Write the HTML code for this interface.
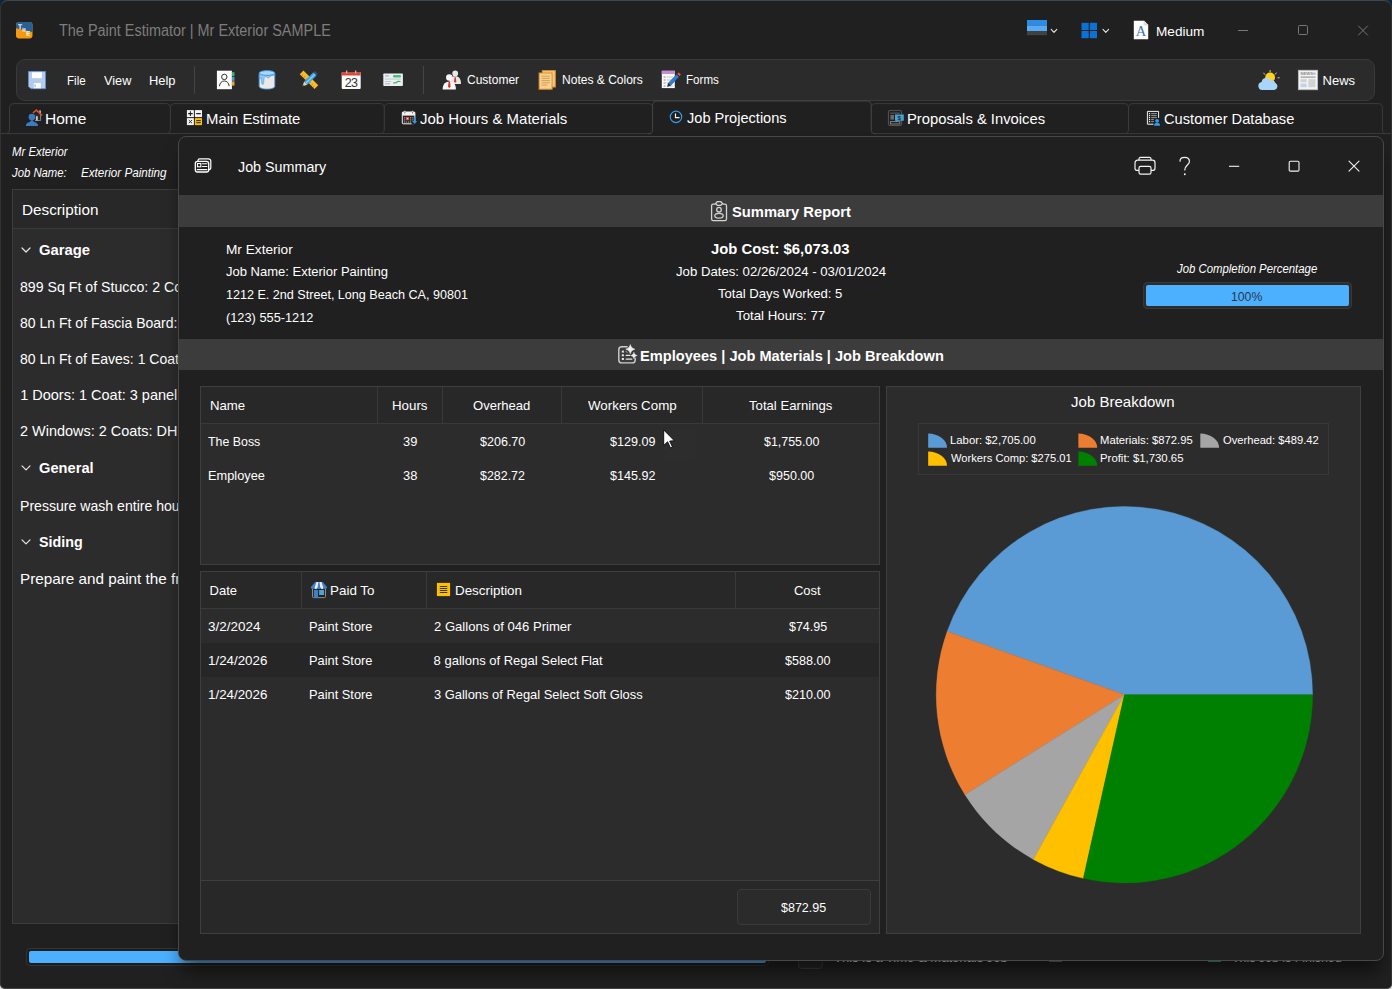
<!DOCTYPE html>
<html><head><meta charset="utf-8"><title>The Paint Estimator</title>
<style>
html,body{margin:0;padding:0;background:#202020;}
body{width:1392px;height:989px;position:relative;overflow:hidden;font-family:"Liberation Sans",sans-serif;color:#fff;}
.a{position:absolute;box-sizing:border-box;}
.t{position:absolute;white-space:pre;transform-origin:0 50%;font-family:"Liberation Sans",sans-serif;}
svg{position:absolute;overflow:visible;}
#desk{left:0;top:0;width:1392px;height:989px;background:linear-gradient(#10263c 0,#10263c 50%,#d8d8d8 50%,#d8d8d8 100%);}
#win{left:0;top:0;width:1392px;height:989px;background:#202020;border:1px solid #454545;border-left-color:#333;border-right-color:#333;border-top-color:#3a4855;border-radius:8px 8px 5px 5px;}
#toolbar{left:16px;top:59px;width:1359px;height:42px;background:#2b2b2b;border:1px solid #3a3a3a;border-radius:9px;}
.sep{width:1px;background:#444;top:66px;height:28px;}
.tab{top:103px;height:31px;border:1px solid #373737;border-bottom:none;border-radius:7px 7px 0 0;background:#202020;}
#tabline{left:0;top:133px;width:1392px;height:1px;background:#373737;}
#tabact{left:652px;top:101px;width:220px;height:35px;border:1px solid #373737;border-bottom:none;border-radius:7px 7px 0 0;background:#1e1e1e;}
#grid{left:12px;top:189px;width:1368px;height:735px;background:#2c2c2c;border:1px solid #3d3d3d;}
#gridhead{left:13px;top:190px;width:1366px;height:39px;background:#282828;border-bottom:1px solid #3a3a3a;}
#pbar{left:26px;top:948px;width:743px;height:18px;border:1.5px solid #343434;border-radius:4px;background:#1d1d1d;}
#pfill{left:29px;top:951px;width:737px;height:12px;background:#4cb0ff;border-radius:2px;}
#dlgshadow{left:178px;top:136px;width:1206px;height:825px;border-radius:8px;box-shadow:0 14px 18px -4px rgba(0,0,0,0.55);}
#dlg{left:178px;top:136px;width:1206px;height:825px;background:#202020;border:1px solid #484848;border-radius:8px;overflow:hidden;}
.sec{left:179px;width:1204px;background:#3c3c3c;}
.panel{background:#2c2c2c;border:1px solid #3f3f3f;}
.vl{width:1px;background:#393939;}
.hl{height:1px;background:#393939;}

</style></head>
<body>
<div class="a" id="desk"></div>
<div class="a" id="win"></div>
<!-- title bar icons -->
<svg class="a" style="left:0;top:0" width="1392" height="989" viewBox="0 0 1392 989">
<g>
<clipPath id="appc"><rect x="16" y="22" width="16.5" height="16.5" rx="3.2"/></clipPath>
<g clip-path="url(#appc)">
<rect x="16" y="22" width="17" height="17" fill="#f59a0e"/>
<path d="M16,22 H33 V32.2 L16,28.2 Z" fill="#2a5f8f"/>
<path d="M18,24.3h4.2v1h-1.5v4h-1.2v-4H18z" fill="#e8eef5"/>
<path d="M22.4,27.8h1.1v1.5h.9v-1.3h1.1v4h-1.1v-1.7h-.9v1.5h-1.1z" fill="#e8eef5" opacity=".9"/>
<path d="M26.4,31.2h3.4v1h-2.2v.8h1.9v.9h-1.9v.9h2.3v1h-3.5z" fill="#fdf3dd"/>
</g></g>
<rect x="1027" y="20" width="20" height="5.4" fill="#2b8ce8"/><rect x="1027" y="25.4" width="20" height="5.6" fill="#56aaf6"/><rect x="1027" y="31" width="20" height="4.2" fill="#414141"/>
<path d="M1051.2,29.3 l2.8,3 l2.8,-3" fill="none" stroke="#e6e6e6" stroke-width="1.1" stroke-linecap="round" stroke-linejoin="round"/>
<path d="M1103,29.3 l2.8,3 l2.8,-3" fill="none" stroke="#e6e6e6" stroke-width="1.1" stroke-linecap="round" stroke-linejoin="round"/>
<rect x="1081.5" y="22.8" width="7.2" height="7.2" fill="#0b72d4"/>
<rect x="1089.8" y="22.8" width="7.2" height="7.2" fill="#0b72d4"/>
<rect x="1081.5" y="31.0" width="7.2" height="7.2" fill="#0b72d4"/>
<rect x="1089.8" y="31.0" width="7.2" height="7.2" fill="#0b72d4"/>
<path d="M1133.8,20.8 h10.2 l4.2,4.2 v14.2 h-14.4 z" fill="#fdfdfd"/><path d="M1144,20.8 v4.2 h4.2 z" fill="#e4e4e4" stroke="#cfcfcf" stroke-width="0.5"/>
<text x="1141" y="36.4" font-family="Liberation Serif,serif" font-size="14.5" fill="#3c74b8" text-anchor="middle">A</text>
<path d="M1238,30.5 h10" stroke="#777" stroke-width="1"/>
<rect x="1298.5" y="25.5" width="9" height="9" rx="1" fill="none" stroke="#777" stroke-width="1"/>
<path d="M1358.2,25.7 l9.6,9.6 M1367.8,25.7 l-9.6,9.6" stroke="#777" stroke-width="1" fill="none"/>
</svg>
<!-- toolbar -->
<div class="a" id="toolbar"></div>
<div class="a sep" style="left:194px"></div>
<div class="a sep" style="left:423px"></div>
<svg class="a" style="left:0;top:0" width="1392" height="989" viewBox="0 0 1392 989">
<path d="M28.5,71.5 h17 v17.2 h-14.6 l-2.4,-2.4 z" fill="#b4cbe9" stroke="#5f8dc8" stroke-width="1"/>
<rect x="31.6" y="72" width="10.6" height="6.6" fill="#ffffff" stroke="#9fbbe0" stroke-width="0.5"/>
<rect x="33.3" y="82.8" width="7.8" height="5.4" fill="#fafcff" stroke="#9fbbe0" stroke-width="0.5"/>
<rect x="34.4" y="84.2" width="1.5" height="3" fill="#b4cbe9"/>
<rect x="216.9" y="70.7" width="15" height="18.5" fill="#fdfdfd"/>
<rect x="231.9" y="72.2" width="2.6" height="4" fill="#3fb760"/>
<rect x="231.9" y="77" width="2.6" height="3.8" fill="#4a9be6"/>
<rect x="231.9" y="81.4" width="2.6" height="4.2" fill="#f0a030"/>
<circle cx="224.3" cy="76.9" r="2.7" fill="none" stroke="#333" stroke-width="1"/>
<path d="M219.4,86.2 c0.5,-3.4 2.3,-5.2 4.9,-5.2 c2.6,0 4.4,1.8 4.9,5.2" fill="none" stroke="#333" stroke-width="1"/>
<path d="M259.2,73 v13.2 c0,1.7 3.5,2.9 7.8,2.9 c4.3,0 7.8,-1.2 7.8,-2.9 v-13.2 z" fill="#ebe9e7"/>
<path d="M259.2,74.6 v3.6 c0.9,0.5 1.5,0.3 1.8,-0.5 l0.7,5.8 c0.4,1.2 1.6,1.2 1.9,0 l0.5,-5.6 c0.5,-1.5 1.9,-1.7 2.9,-0.6 c0.9,1 1.8,0.9 2.5,-0.1 c0.9,-1.3 2.5,-1.9 5.3,-2 v-2 z" fill="#8fc9f3" stroke="#4a9ce4" stroke-width="0.6"/>
<path d="M259.2,73 v13.2 c0,1.7 3.5,2.9 7.8,2.9 c4.3,0 7.8,-1.2 7.8,-2.9 v-13.2" fill="none" stroke="#4a9ce4" stroke-width="0.9"/>
<ellipse cx="267" cy="73" rx="7.8" ry="2.4" fill="#a9d7f8" stroke="#3d8fde" stroke-width="0.9"/>
<g transform="translate(309 79.8) scale(0.9) translate(-309 -79.8) rotate(-45 309 79.8)"><rect x="306.1" y="68.2" width="5.8" height="23.2" fill="#f6be2c"/>
<path d="M306.4,71h2 M306.4,74h2.6 M306.4,77h2 M306.4,80h2.6 M306.4,83h2 M306.4,86h2.6 M306.4,89h2" stroke="#b0503a" stroke-width="0.7"/></g>
<g transform="translate(309 79.8) scale(0.9) translate(-309 -79.8) rotate(45 309 79.8)"><rect x="306.5" y="70.4" width="5" height="14.6" fill="#38a4f0"/>
<rect x="306.5" y="68" width="5" height="2.6" rx="1" fill="#3b4a5c"/>
<path d="M306.5,85 h5 l-2.5,5 z" fill="#f2cf9a"/><path d="M308.2,88.4 h1.6 l-0.8,1.8 z" fill="#444"/>
<rect x="308.4" y="70.4" width="1.5" height="14.6" fill="#86cbf9"/></g>
<rect x="341.7" y="72" width="19" height="16.9" rx="1" fill="#fbfbfb"/>
<path d="M341.7,73 a1,1 0 0 1 1,-1 h17 a1,1 0 0 1 1,1 v2.6 h-19 z" fill="#d64a3a"/>
<rect x="346" y="70.5" width="1.3" height="3" fill="#bbb"/><rect x="355" y="70.5" width="1.3" height="3" fill="#bbb"/>
<text x="351" y="87.3" font-family="Liberation Sans,sans-serif" font-size="12.5" fill="#333" text-anchor="middle" letter-spacing="-0.6">23</text>
<rect x="383.3" y="73.5" width="19.6" height="12.5" rx="0.8" fill="#eceff1"/>
<rect x="385" y="75.2" width="4" height="1.4" fill="#b9bec4"/><rect x="393" y="75" width="8" height="2.4" rx="1" fill="#4cc07a"/>
<rect x="385" y="78.6" width="16" height="1" fill="#c3c8cd"/>
<rect x="385" y="81" width="6" height="1" fill="#c3c8cd"/><rect x="385" y="83.2" width="5" height="1.2" fill="#b9bec4"/>
<path d="M393.5,83.4 c1,-2 2,0.5 3,-1 s2,-1.2 4,-0.8" fill="none" stroke="#3db36b" stroke-width="1.2"/>
<circle cx="455.2" cy="73.452" r="2.8520000000000003" fill="#e9e9e9"/><path d="M449.404,83.94 c0,-5.2 2.0240000000000005,-7.6 5.796,-7.6 c3.772,0 5.796,2.4 5.796,7.6 z" fill="#e9e9e9"/><path d="M454.556,77.22399999999999 h1.288 l0.46,4.232 l-1.104,1.4720000000000002 l-1.104,-1.4720000000000002 z" fill="#d8342a"/>
<circle cx="449.3" cy="77.455" r="3.2550000000000003" fill="#f7f7f7"/><path d="M442.685,89.42500000000001 c0,-5.2 2.3100000000000005,-7.6 6.615,-7.6 c4.305,0 6.615,2.4 6.615,7.6 z" fill="#f7f7f7"/><path d="M448.565,81.76 h1.47 l0.525,4.83 l-1.26,1.6800000000000002 l-1.26,-1.6800000000000002 z" fill="#d8342a"/>
<rect x="542.3" y="70.6" width="13" height="16.4" fill="#f3c685" stroke="#dd8c2c" stroke-width="1"/>
<rect x="539.1" y="73" width="13" height="16.2" fill="#f7d193" stroke="#dd8c2c" stroke-width="1"/>
<path d="M541.5,76.2h8.4 M541.5,78.4h8.4 M541.5,80.6h8.4 M541.5,82.8h8.4 M541.5,85h6" stroke="#c9963e" stroke-width="0.8"/>
<rect x="661.8" y="70.8" width="13" height="17.3" fill="#fbfbfb"/>
<rect x="661.8" y="70.8" width="13" height="3.2" fill="#c78bd3"/>
<path d="M663.6,77h2 M663.6,80h2 M663.6,83h2 M663.6,86h2" stroke="#8a8a8a" stroke-width="1"/>
<path d="M666.8,77h6 M666.8,80h5 M666.8,83h3.4 M666.8,86h6" stroke="#c4c4c4" stroke-width="1"/>
<path d="M676.5,74.6 l2.4,2.2 l-8.2,8.6 l-3.2,1 l0.9,-3.3 z" fill="#2f7fd6" stroke="#1f4f86" stroke-width="0.5"/>
<path d="M667.5,86.4 l0.9,-3.3 l2.3,2.3 z" fill="#2b2b2b"/>
<path d="M677.2,73.9 l1,-1 a0.9,0.9 0 0 1 1.3,0 l1,1 a0.9,0.9 0 0 1 0,1.2 l-1,1 z" fill="#e2574c"/>
<path d="M1263.4,72.8 l1.8,2 M1270.1,70 v2.2 M1276.6,72.6 l-1.8,2 M1277.6,77.8 h2" stroke="#c9c9c9" stroke-width="1" fill="none"/>
<circle cx="1270.1" cy="77.4" r="4.9" fill="#ffd21f"/>
<path d="M1262.2,90.1 a4.1,4.1 0 0 1 -0.6,-8.1 a5.2,5.2 0 0 1 9.8,-1.4 a3.6,3.6 0 0 1 4,2.4 a3.8,3.8 0 0 1 -1.2,7.1 z" fill="#a8d5f8"/>
<rect x="1298.4" y="70.3" width="19.2" height="19.4" fill="#f2f2f2" stroke="#bdbdbd" stroke-width="0.9"/>
<text x="1300.4" y="75.2" font-family="Liberation Sans,sans-serif" font-size="4.2" font-weight="700" fill="#8e8e8e">NEWS</text>
<rect x="1312.6" y="72.6" width="3" height="2" fill="#bdbdbd"/>
<rect x="1300.6" y="76.6" width="14.8" height="1" fill="#8a8a8a"/>
<rect x="1300.6" y="79.2" width="6" height="3" fill="#d2d2d2"/>
<rect x="1300.6" y="83.6" width="6" height="3.6" fill="#c3d2ea"/>
<rect x="1308.4" y="79.2" width="7" height="8" fill="#d2d2d2"/>
</svg>
<!-- tabs -->
<svg class="a" style="left:0;top:0" width="1392" height="989" viewBox="0 0 1392 989">
<path d="M5.0,133.6 Q9.5,133.6 9.5,129.1 V108.1 Q9.5,103.6 14.0,103.6 H165.9 Q170.4,103.6 170.4,108.1 V129.1 Q170.4,133.6 174.9,133.6" fill="#202020" stroke="#3b3b3b" stroke-width="1"/>
<path d="M165.9,133.6 Q170.4,133.6 170.4,129.1 V108.1 Q170.4,103.6 174.9,103.6 H379.8 Q384.3,103.6 384.3,108.1 V129.1 Q384.3,133.6 388.8,133.6" fill="#202020" stroke="#3b3b3b" stroke-width="1"/>
<path d="M379.8,133.6 Q384.3,133.6 384.3,129.1 V108.1 Q384.3,103.6 388.8,103.6 H648.1 Q652.6,103.6 652.6,108.1 V129.1 Q652.6,133.6 657.1,133.6" fill="#202020" stroke="#3b3b3b" stroke-width="1"/>
<path d="M866.7,133.6 Q871.2,133.6 871.2,129.1 V108.1 Q871.2,103.6 875.7,103.6 H1124.0 Q1128.5,103.6 1128.5,108.1 V129.1 Q1128.5,133.6 1133.0,133.6" fill="#202020" stroke="#3b3b3b" stroke-width="1"/>
<path d="M1124.0,133.6 Q1128.5,133.6 1128.5,129.1 V108.1 Q1128.5,103.6 1133.0,103.6 H1377.9 Q1382.4,103.6 1382.4,108.1 V129.1 Q1382.4,133.6 1386.9,133.6" fill="#202020" stroke="#3b3b3b" stroke-width="1"/>
<path d="M1,133.6 H1391" fill="none" stroke="#3b3b3b" stroke-width="1"/>
<path d="M648.1,133.8 Q652.6,133.8 652.6,129.3 V105.5 Q652.6,101 657.1,101 H866.7 Q871.2,101 871.2,105.5 V129.3 Q871.2,133.8 875.7,133.8" fill="#202020" stroke="#444" stroke-width="1"/>
<rect x="653.2" y="132.6" width="217.4" height="2.2" fill="#202020"/>
</svg>
<svg class="a" style="left:0;top:0" width="1392" height="989" viewBox="0 0 1392 989">
<rect x="39.3" y="110.4" width="1.5" height="3.2" fill="#cfcfcf"/>
<rect x="34.8" y="114" width="6" height="6.5" fill="#2b2b2b"/>
<path d="M40.6,114.6 V120.5 H35" fill="none" stroke="#8e8e8e" stroke-width="0.9"/>
<rect x="35.9" y="116.2" width="1.9" height="4.2" fill="#c9c9c9"/>
<path d="M32.9,113 L36.4,110.1 L42,115.4" fill="none" stroke="#d9532f" stroke-width="1.6"/>
<circle cx="31.9" cy="117" r="3.3" fill="#3a7cc0"/>
<path d="M25.9,125.9 c0,-2.7 1.6,-3.5 3.7,-4 c0.9,-0.2 1.1,-0.7 1.1,-1.6 h2.5 c0,0.9 0.2,1.4 1.1,1.6 c2.1,0.5 3.7,1.3 3.7,4 z" fill="#3a7cc0"/>
<rect x="186.9" y="110.1" width="7" height="7" fill="#f6f6f6"/><rect x="194.9" y="110.1" width="7.1" height="7" fill="#f6f6f6"/>
<rect x="186.9" y="118.1" width="7" height="7" fill="#f1f1f1"/><rect x="194.9" y="118.1" width="7.1" height="7" fill="#ffc000"/>
<path d="M190.4,111.3 v4.6 M188.1,113.6 h4.6 M196.2,113.6 h4.6" stroke="#222" stroke-width="1.1"/>
<path d="M188.8,120 l3.2,3.2 M192,120 l-3.2,3.2" stroke="#333" stroke-width="1"/>
<path d="M196.2,120.6 h4.6 M196.2,122.7 h4.6" stroke="#222" stroke-width="1"/>
<rect x="402.3" y="112" width="12.6" height="11.8" rx="0.8" fill="#262626" stroke="#f2f2f2" stroke-width="1"/>
<rect x="402.3" y="112" width="12.6" height="3.6" fill="#f2f2f2"/>
<rect x="404.2" y="110.8" width="1.2" height="2.6" fill="#f2f2f2"/><rect x="411.8" y="110.8" width="1.2" height="2.6" fill="#f2f2f2"/>
<rect x="404.6" y="111.6" width="0.6" height="1.8" fill="#262626"/><rect x="412.1" y="111.6" width="0.6" height="1.8" fill="#262626"/>
<g fill="#9a9a9a"><rect x="404" y="117.2" width="1.2" height="1.2"/><rect x="410" y="117.2" width="1.2" height="1.2"/><rect x="412.2" y="117.2" width="1.2" height="1.2"/>
<rect x="404" y="119.3" width="1.2" height="1.2"/><rect x="410" y="119.3" width="1.2" height="1.2"/><rect x="412.2" y="119.3" width="1.2" height="1.2"/>
<rect x="404" y="121.4" width="1.2" height="1.2"/><rect x="406" y="121.4" width="1.2" height="1.2"/><rect x="408" y="121.4" width="1.2" height="1.2"/><rect x="410" y="121.4" width="1.2" height="1.2"/></g>
<rect x="405.9" y="117" width="3.2" height="3.2" fill="#f24848"/><rect x="406.9" y="118" width="1.2" height="1.2" fill="#ffd0d0"/>
<rect x="411.6" y="121" width="6" height="3.6" fill="#202020"/>
<path d="M414.6,117.2 v5" stroke="#2f9cf0" stroke-width="1.3"/><path d="M412.2,120.9 h4.9 l-2.45,3.2 z" fill="#2f9cf0"/>
<circle cx="676" cy="116.9" r="5.7" fill="none" stroke="#3a9be8" stroke-width="1.2"/>
<path d="M675.5,113.6 v4.1 h4" fill="none" stroke="#f4f4f4" stroke-width="1.2"/>
<rect x="888.4" y="110.4" width="13.2" height="15.2" rx="1.6" fill="none" stroke="#565656" stroke-width="1"/>
<rect x="890.2" y="112.4" width="9.6" height="1.6" fill="#4a4a4a"/>
<rect x="890.4" y="115" width="3.6" height="4.6" fill="#6a6a6a"/>
<rect x="890.4" y="121.6" width="9.4" height="2.4" fill="none" stroke="#8a8a8a" stroke-width="0.9"/>
<path d="M895,114.4 h8.8 v6.4 h-6 l-1.6,1.8 v-1.8 h-1.2 z" fill="#43a3d4"/>
<text x="899.3" y="120" font-family="Liberation Sans,sans-serif" font-size="6.2" font-weight="700" fill="#1f2a38" text-anchor="middle">$</text>
<path d="M1153.5,124.2 h-6.1 v-12.8 h11.2 v6.5" fill="none" stroke="#f2f2f2" stroke-width="1"/>
<g fill="#f4f4f4"><rect x="1148.9" y="113" width="1.2" height="1.2"/><rect x="1148.9" y="115" width="1.2" height="1.2"/><rect x="1148.9" y="117" width="1.2" height="1.2"/><rect x="1148.9" y="119" width="1.2" height="1.2"/><rect x="1148.9" y="121" width="1.2" height="1.2"/></g>
<path d="M1151.2,113.6h5.6 M1151.2,115.6h5.6 M1151.2,117.6h5.6 M1151.2,119.6h2.6 M1151.2,121.6h2.6" stroke="#a8a8a8" stroke-width="0.9"/>
<circle cx="1157.1" cy="120.8" r="1.9" fill="#2f9cf0"/>
<path d="M1154.1,125.8 c0,-2.2 1.2,-3 3,-3 c1.8,0 3,0.8 3,3 z" fill="#2f9cf0"/>
</svg>
<!-- left panel -->
<div class="a" id="grid"></div>
<div class="a" id="gridhead"></div>
<svg class="a" style="left:0;top:0" width="1392" height="989" viewBox="0 0 1392 989">
<path d="M22,248.0 l4,4 l4,-4" fill="none" stroke="#e6e6e6" stroke-width="1.2" stroke-linecap="round" stroke-linejoin="round"/>
<path d="M22,465.8 l4,4 l4,-4" fill="none" stroke="#e6e6e6" stroke-width="1.2" stroke-linecap="round" stroke-linejoin="round"/>
<path d="M22,539.8 l4,4 l4,-4" fill="none" stroke="#e6e6e6" stroke-width="1.2" stroke-linecap="round" stroke-linejoin="round"/>
</svg>
<div class="a" id="pbar"></div>
<div class="a" id="pfill"></div>
<div class="a" style="left:798px;top:944px;width:25px;height:25px;border:1px solid #3a3a3a;border-radius:4px;background:#262626"></div>
<div class="a" style="left:1207.6px;top:960.6px;width:13px;height:1.4px;background:#2fae6e"></div>
<div class="a" style="left:1048.7px;top:960.6px;width:13px;height:1.6px;background:#6a6a6a"></div>

<span class="t" style="left:11.99px;top:144.30px;font-size:12px;line-height:17px;color:#ffffff;font-style:italic;transform:scaleX(0.9463);">Mr Exterior</span>
<span class="t" style="left:11.99px;top:165.10px;font-size:12px;line-height:17px;color:#ffffff;font-style:italic;transform:scaleX(0.9429);">Job Name:</span>
<span class="t" style="left:80.68px;top:165.10px;font-size:12px;line-height:17px;color:#ffffff;font-style:italic;transform:scaleX(0.9716);">Exterior Painting</span>
<span class="t" style="left:21.81px;top:199.20px;font-size:15.5px;line-height:22px;color:#ffffff;transform:scaleX(0.9851);">Description</span>
<span class="t" style="left:38.83px;top:240.40px;font-size:14.5px;line-height:20px;color:#ffffff;font-weight:700;transform:scaleX(1.0210);">Garage</span>
<span class="t" style="left:20.16px;top:277.20px;font-size:14.5px;line-height:20px;color:#ffffff;transform:scaleX(0.9765);">899 Sq Ft of Stucco: 2 Coats</span>
<span class="t" style="left:20.17px;top:313.40px;font-size:14.5px;line-height:20px;color:#ffffff;transform:scaleX(0.9671);">80 Ln Ft of Fascia Board: 1</span>
<span class="t" style="left:20.17px;top:349.20px;font-size:14.5px;line-height:20px;color:#ffffff;transform:scaleX(0.9667);">80 Ln Ft of Eaves: 1 Coats</span>
<span class="t" style="left:20.15px;top:385.30px;font-size:14.5px;line-height:20px;color:#ffffff;">1 Doors: 1 Coat: 3 panel</span>
<span class="t" style="left:20.15px;top:421.30px;font-size:14.5px;line-height:20px;color:#ffffff;transform:scaleX(0.9965);">2 Windows: 2 Coats: DH</span>
<span class="t" style="left:38.84px;top:458.20px;font-size:14.5px;line-height:20px;color:#ffffff;font-weight:700;transform:scaleX(1.0115);">General</span>
<span class="t" style="left:20.17px;top:495.60px;font-size:14.5px;line-height:20px;color:#ffffff;transform:scaleX(0.9713);">Pressure wash entire house</span>
<span class="t" style="left:38.86px;top:532.00px;font-size:14.5px;line-height:20px;color:#ffffff;font-weight:700;transform:scaleX(0.9859);">Siding</span>
<span class="t" style="left:20.11px;top:569.30px;font-size:14.5px;line-height:20px;color:#ffffff;transform:scaleX(1.0525);">Prepare and paint the front</span>
<span class="t" style="left:834.41px;top:945.50px;font-size:15px;line-height:21px;color:#e8e8e8;transform:scaleX(0.8686);">This is a Time &amp; Materials Job</span>
<span class="t" style="left:1231.74px;top:945.50px;font-size:15px;line-height:21px;color:#e8e8e8;transform:scaleX(0.8269);">This Job is Finished</span>
<span class="t" style="left:381.51px;top:946.90px;font-size:12.5px;line-height:18px;color:#26384a;transform:scaleX(0.8749);">100%</span>
<!-- dialog -->
<div class="a" id="dlgshadow"></div>
<div class="a" id="dlg"></div>
<div class="a sec" style="top:195px;height:32px"></div>
<div class="a sec" style="top:339px;height:31px"></div>
<!-- progress -->
<div class="a" style="left:1143px;top:282px;width:209px;height:27px;background:#2c2c2c;border:1px solid #383838;border-radius:4px"></div>
<div class="a" style="left:1146px;top:285px;width:203px;height:21px;background:#4cb0ff;border-radius:2px"></div>
<!-- employee table -->
<div class="a panel" style="left:200px;top:386px;width:680px;height:179px"></div>
<div class="a" style="left:201px;top:387px;width:678px;height:36px;background:#282828"></div>
<div class="a hl" style="left:201px;top:423px;width:678px"></div>
<div class="a vl" style="left:377px;top:387px;height:36px"></div>
<div class="a vl" style="left:442px;top:387px;height:36px"></div>
<div class="a vl" style="left:561px;top:387px;height:36px"></div>
<div class="a vl" style="left:702px;top:387px;height:36px"></div>
<!-- materials table -->
<div class="a panel" style="left:200px;top:571px;width:680px;height:363px"></div>
<div class="a" style="left:201px;top:572px;width:678px;height:36px;background:#282828"></div>
<div class="a hl" style="left:201px;top:608px;width:678px"></div>
<div class="a vl" style="left:301px;top:572px;height:36px"></div>
<div class="a vl" style="left:426px;top:572px;height:36px"></div>
<div class="a vl" style="left:735px;top:572px;height:36px"></div>
<div class="a" style="left:201px;top:643px;width:678px;height:34px;background:#262626"></div>
<div class="a" style="left:201px;top:880px;width:678px;height:53px;background:#282828;border-top:1px solid #3f3f3f"></div>
<div class="a" style="left:737px;top:889px;width:134px;height:36px;background:#2b2b2b;border:1px solid #3a3a3a;border-radius:4px"></div>
<!-- chart -->
<div class="a panel" style="left:886px;top:386px;width:475px;height:548px"></div>
<div class="a" style="left:918px;top:423px;width:411px;height:52px;border:1px solid #383838"></div>
<svg class="a" style="left:0;top:0" width="1392" height="989" viewBox="0 0 1392 989">
<path d="M1124.40,694.70 L1312.60,694.70 A188.2,188.2 0 0 0 947.16,631.41 Z" fill="#5b9bd5" stroke="#5b9bd5" stroke-width="0.4"/>
<path d="M1124.40,694.70 L947.16,631.41 A188.2,188.2 0 0 0 964.96,794.70 Z" fill="#ed7d31" stroke="#ed7d31" stroke-width="0.4"/>
<path d="M1124.40,694.70 L964.96,794.70 A188.2,188.2 0 0 0 1033.47,859.47 Z" fill="#a5a5a5" stroke="#a5a5a5" stroke-width="0.4"/>
<path d="M1124.40,694.70 L1033.47,859.47 A188.2,188.2 0 0 0 1083.38,878.37 Z" fill="#ffc000" stroke="#ffc000" stroke-width="0.4"/>
<path d="M1124.40,694.70 L1083.38,878.37 A188.2,188.2 0 0 0 1312.60,694.70 Z" fill="#008000" stroke="#008000" stroke-width="0.4"/>
<path d="M928.20,447.80 L928.20,433.60 A18.80,14.20 0 0 1 947.00,447.80 Z" fill="#5b9bd5"/>
<path d="M1078.40,447.80 L1078.40,433.60 A18.80,14.20 0 0 1 1097.20,447.80 Z" fill="#ed7d31"/>
<path d="M1200.30,447.80 L1200.30,433.60 A18.80,14.20 0 0 1 1219.10,447.80 Z" fill="#a5a5a5"/>
<path d="M928.20,465.80 L928.20,451.60 A18.80,14.20 0 0 1 947.00,465.80 Z" fill="#ffc000"/>
<path d="M1078.40,465.80 L1078.40,451.60 A18.80,14.20 0 0 1 1097.20,465.80 Z" fill="#008000"/>
</svg>
<svg class="a" style="left:0;top:0" width="1392" height="989" viewBox="0 0 1392 989">
<path d="M198,161.2 v-0.6 a1.8,1.8 0 0 1 1.8,-1.8 h8.6 a2.4,2.4 0 0 1 2.4,2.4 v6.2 a2.2,2.2 0 0 1 -2.2,2.2" fill="none" stroke="#fff" stroke-width="1.2"/>
<rect x="195.3" y="161.4" width="13.4" height="10.6" rx="2.2" fill="none" stroke="#fff" stroke-width="1.3"/>
<rect x="197.5" y="163.5" width="3.3" height="3.3" fill="none" stroke="#fff" stroke-width="1.1"/>
<path d="M202.4,163.7 h4.5 M202.4,166.5 h4.5 M197.3,169.6 h9.6" stroke="#fff" stroke-width="1.1" stroke-linecap="round"/>
<g fill="none" stroke="#f2f2f2" stroke-width="1.2" stroke-linejoin="round">
<path d="M1139,160.2 v-1.4 a1.4,1.4 0 0 1 1.4,-1.4 h9.2 a1.4,1.4 0 0 1 1.4,1.4 v1.4"/>
<path d="M1139,170.4 h-1.8 a2.2,2.2 0 0 1 -2.2,-2.2 v-5.4 a2.6,2.6 0 0 1 2.6,-2.6 h14.8 a2.6,2.6 0 0 1 2.6,2.6 v5.4 a2.2,2.2 0 0 1 -2.2,2.2 h-1.8"/>
<rect x="1139" y="166.4" width="12" height="7.8" rx="1.6"/></g>
<path d="M1180,161.2 c0,-2.6 2,-3.8 4.6,-3.8 c2.8,0 4.8,1.6 4.8,4 c0,3.6 -4.6,3.8 -4.6,8.6" fill="none" stroke="#f2f2f2" stroke-width="1.2" stroke-linecap="round"/>
<circle cx="1184.8" cy="174.3" r="0.95" fill="#f2f2f2"/>
<path d="M1229,166.3 h10.2" stroke="#f2f2f2" stroke-width="1.1"/>
<rect x="1289.2" y="161.3" width="9.8" height="9.8" rx="1.2" fill="none" stroke="#f2f2f2" stroke-width="1.1"/>
<path d="M1349,161.2 l10,10 M1359,161.2 l-10,10" stroke="#f2f2f2" stroke-width="1.1" stroke-linecap="round"/>
<g fill="none" stroke="#d4d4d4" stroke-width="1.3">
<path d="M715.6,204.2 h-2.4 a1.6,1.6 0 0 0 -1.6,1.6 v13.2 a1.6,1.6 0 0 0 1.6,1.6 h11.7 a1.6,1.6 0 0 0 1.6,-1.6 v-13.2 a1.6,1.6 0 0 0 -1.6,-1.6 h-2.4"/>
<path d="M717.3,201.7 h3.5 l1.7,1.8 l-1.7,1.9 h-3.5 l-1.7,-1.9 z"/>
<circle cx="719" cy="209.7" r="2.3"/>
<ellipse cx="719" cy="215.8" rx="4.2" ry="2.4"/></g>
<path d="M627.2,346.7 h-5.4 a3,3 0 0 0 -3,3 v10.2 a3,3 0 0 0 3,3 h10.4 a3,3 0 0 0 3,-3 v-1.6" fill="none" stroke="#cfcfcf" stroke-width="1.4" stroke-linecap="round"/>
<g fill="#e6e6e6"><rect x="621.8" y="350.6" width="2.1" height="2" /><rect x="621.8" y="354.3" width="2.1" height="2"/><rect x="621.8" y="358" width="2.1" height="2"/></g>
<path d="M626.2,355.4 h3.4 M626.2,359.2 h5.6" stroke="#e6e6e6" stroke-width="1.2" stroke-linecap="round"/>
<path d="M626,351.4 l1,1" stroke="#bdbdbd" stroke-width="1" stroke-linecap="round"/>
<path d="M630.3,344.6 c0.8,2.8 1.8,3.8 4.6,4.6 c-2.8,0.8 -3.8,1.8 -4.6,4.6 c-0.8,-2.8 -1.8,-3.8 -4.6,-4.6 c2.8,-0.8 3.8,-1.8 4.6,-4.6 z" fill="#efefef" stroke="#efefef" stroke-width="0.5" stroke-linejoin="round"/>
<path d="M633.9,352.2 c0.6,2 1.3,2.7 3.3,3.3 c-2,0.6 -2.7,1.3 -3.3,3.3 c-0.6,-2 -1.3,-2.7 -3.3,-3.3 c2,-0.6 2.7,-1.3 3.3,-3.3 z" fill="#efefef" stroke="#efefef" stroke-width="0.4" stroke-linejoin="round"/>
<rect x="312.5" y="588" width="13" height="9.6" rx="0.8" fill="#222" stroke="#8c8c8c" stroke-width="1"/>
<rect x="313.9" y="589.9" width="4.2" height="8.2" fill="#3f80c4"/>
<rect x="319.1" y="589.9" width="5" height="5.1" fill="#4fa3d0"/>
<clipPath id="awn"><path d="M315.2,581.9 h7.5 l4.3,5 v0.4 a1.6,1.6 0 0 1 -3.2,0 a1.6,1.6 0 0 1 -3.2,0 a1.6,1.6 0 0 1 -3.3,0 a1.6,1.6 0 0 1 -3.2,0 a1.6,1.6 0 0 1 -3.2,0 v-0.4 z"/></clipPath>
<g clip-path="url(#awn)"><rect x="310" y="581" width="18" height="9" fill="#3d82cc"/>
<path d="M316.6,581.5 h1.9 l-1.2,8 h-3.3 z" fill="#ececec"/><path d="M319.4,581.5 h1.9 l2.6,8 h-3.3 z" fill="#ececec"/></g>
<rect x="436.9" y="582.9" width="13.2" height="13.2" fill="#ffc000"/><path d="M440.2,586.5h6.7 M440.2,588.5h6.7 M440.2,590.5h6.7 M440.2,592.5h6.7" stroke="#1c2540" stroke-width="0.9" stroke-linecap="round"/>
</svg>
<span class="t" style="left:58.85px;top:20.10px;font-size:16px;line-height:22px;color:#7d7d7d;transform:scaleX(0.9026);">The Paint Estimator | Mr Exterior SAMPLE</span>
<span class="t" style="left:1155.99px;top:22.60px;font-size:13px;line-height:18px;color:#ffffff;transform:scaleX(1.0470);">Medium</span>
<span class="t" style="left:67.18px;top:71.80px;font-size:13px;line-height:18px;color:#ffffff;transform:scaleX(0.8896);">File</span>
<span class="t" style="left:104.03px;top:71.80px;font-size:13px;line-height:18px;color:#ffffff;transform:scaleX(0.9782);">View</span>
<span class="t" style="left:149.02px;top:71.80px;font-size:13px;line-height:18px;color:#ffffff;transform:scaleX(0.9930);">Help</span>
<span class="t" style="left:467.06px;top:71.30px;font-size:13px;line-height:18px;color:#ffffff;transform:scaleX(0.9241);">Customer</span>
<span class="t" style="left:562.26px;top:71.30px;font-size:13px;line-height:18px;color:#ffffff;transform:scaleX(0.9252);">Notes &amp; Colors</span>
<span class="t" style="left:685.98px;top:71.30px;font-size:13px;line-height:18px;color:#ffffff;transform:scaleX(0.8914);">Forms</span>
<span class="t" style="left:1322.62px;top:71.80px;font-size:13px;line-height:18px;color:#ffffff;">News</span>
<span class="t" style="left:45.00px;top:108.80px;font-size:14.5px;line-height:20px;color:#ffffff;transform:scaleX(1.0700);">Home</span>
<span class="t" style="left:205.83px;top:108.80px;font-size:14.5px;line-height:20px;color:#ffffff;transform:scaleX(1.0268);">Main Estimate</span>
<span class="t" style="left:420.33px;top:108.80px;font-size:14.5px;line-height:20px;color:#ffffff;transform:scaleX(1.0330);">Job Hours &amp; Materials</span>
<span class="t" style="left:686.94px;top:108.00px;font-size:14.5px;line-height:20px;color:#ffffff;transform:scaleX(1.0047);">Job Projections</span>
<span class="t" style="left:906.53px;top:108.80px;font-size:14.5px;line-height:20px;color:#ffffff;transform:scaleX(1.0201);">Proposals &amp; Invoices</span>
<span class="t" style="left:1163.84px;top:108.80px;font-size:14.5px;line-height:20px;color:#ffffff;transform:scaleX(1.0106);">Customer Database</span>
<span class="t" style="left:238.26px;top:156.20px;font-size:15.5px;line-height:22px;color:#ffffff;transform:scaleX(0.9233);">Job Summary</span>
<span class="t" style="left:731.54px;top:202.40px;font-size:14.5px;line-height:20px;color:#ffffff;font-weight:700;transform:scaleX(1.0170);">Summary Report</span>
<span class="t" style="left:225.59px;top:240.80px;font-size:13px;line-height:18px;color:#ffffff;transform:scaleX(1.0498);">Mr Exterior</span>
<span class="t" style="left:226.02px;top:263.40px;font-size:13px;line-height:18px;color:#ffffff;">Job Name: Exterior Painting</span>
<span class="t" style="left:226.13px;top:286.40px;font-size:13px;line-height:18px;color:#ffffff;transform:scaleX(0.9674);">1212 E. 2nd Street, Long Beach CA, 90801</span>
<span class="t" style="left:225.62px;top:308.80px;font-size:13px;line-height:18px;color:#ffffff;transform:scaleX(0.9836);">(123) 555-1212</span>
<span class="t" style="left:711.13px;top:237.80px;font-size:15px;line-height:21px;color:#ffffff;font-weight:700;transform:scaleX(0.9891);">Job Cost: $6,073.03</span>
<span class="t" style="left:675.91px;top:263.00px;font-size:13px;line-height:18px;color:#ffffff;transform:scaleX(1.0132);">Job Dates: 02/26/2024 - 03/01/2024</span>
<span class="t" style="left:718.41px;top:284.80px;font-size:13px;line-height:18px;color:#ffffff;transform:scaleX(1.0087);">Total Days Worked: 5</span>
<span class="t" style="left:736.10px;top:306.80px;font-size:13px;line-height:18px;color:#ffffff;transform:scaleX(1.0201);">Total Hours: 77</span>
<span class="t" style="left:1176.79px;top:259.60px;font-size:12.5px;line-height:18px;color:#ffffff;font-style:italic;transform:scaleX(0.9090);">Job Completion Percentage</span>
<span class="t" style="left:1231.25px;top:288.20px;font-size:13px;line-height:18px;color:#26384a;transform:scaleX(0.9414);">100%</span>
<span class="t" style="left:639.84px;top:346.20px;font-size:14.5px;line-height:20px;color:#ffffff;font-weight:700;transform:scaleX(1.0079);">Employees | Job Materials | Job Breakdown</span>
<span class="t" style="left:209.61px;top:397.20px;font-size:13px;line-height:18px;color:#ffffff;transform:scaleX(1.0144);">Name</span>
<span class="t" style="left:391.60px;top:397.20px;font-size:13px;line-height:18px;color:#ffffff;transform:scaleX(1.0233);">Hours</span>
<span class="t" style="left:472.91px;top:397.20px;font-size:13px;line-height:18px;color:#ffffff;transform:scaleX(1.0049);">Overhead</span>
<span class="t" style="left:587.60px;top:397.20px;font-size:13px;line-height:18px;color:#ffffff;transform:scaleX(1.0260);">Workers Comp</span>
<span class="t" style="left:748.91px;top:397.20px;font-size:13px;line-height:18px;color:#ffffff;transform:scaleX(1.0121);">Total Earnings</span>
<span class="t" style="left:207.94px;top:433.00px;font-size:13px;line-height:18px;color:#ffffff;transform:scaleX(0.9525);">The Boss</span>
<span class="t" style="left:402.92px;top:433.00px;font-size:13px;line-height:18px;color:#ffffff;transform:scaleX(0.9926);">39</span>
<span class="t" style="left:479.94px;top:433.00px;font-size:13px;line-height:18px;color:#ffffff;transform:scaleX(0.9644);">$206.70</span>
<span class="t" style="left:610.13px;top:433.00px;font-size:13px;line-height:18px;color:#ffffff;transform:scaleX(0.9666);">$129.09</span>
<span class="t" style="left:763.94px;top:433.00px;font-size:13px;line-height:18px;color:#ffffff;transform:scaleX(0.9564);">$1,755.00</span>
<span class="t" style="left:207.92px;top:467.20px;font-size:13px;line-height:18px;color:#ffffff;transform:scaleX(0.9834);">Employee</span>
<span class="t" style="left:402.92px;top:467.20px;font-size:13px;line-height:18px;color:#ffffff;transform:scaleX(0.9926);">38</span>
<span class="t" style="left:479.94px;top:467.20px;font-size:13px;line-height:18px;color:#ffffff;transform:scaleX(0.9557);">$282.72</span>
<span class="t" style="left:610.13px;top:467.20px;font-size:13px;line-height:18px;color:#ffffff;transform:scaleX(0.9666);">$145.92</span>
<span class="t" style="left:768.94px;top:467.20px;font-size:13px;line-height:18px;color:#ffffff;transform:scaleX(0.9644);">$950.00</span>
<span class="t" style="left:209.61px;top:582.00px;font-size:13px;line-height:18px;color:#ffffff;">Date</span>
<span class="t" style="left:329.60px;top:582.00px;font-size:13px;line-height:18px;color:#ffffff;transform:scaleX(1.0317);">Paid To</span>
<span class="t" style="left:454.60px;top:582.00px;font-size:13px;line-height:18px;color:#ffffff;transform:scaleX(1.0304);">Description</span>
<span class="t" style="left:793.92px;top:582.00px;font-size:13px;line-height:18px;color:#ffffff;transform:scaleX(0.9975);">Cost</span>
<span class="t" style="left:207.89px;top:618.20px;font-size:13px;line-height:18px;color:#ffffff;transform:scaleX(1.0356);">3/2/2024</span>
<span class="t" style="left:308.62px;top:618.20px;font-size:13px;line-height:18px;color:#ffffff;transform:scaleX(0.9864);">Paint Store</span>
<span class="t" style="left:433.61px;top:618.20px;font-size:13px;line-height:18px;color:#ffffff;transform:scaleX(1.0066);">2 Gallons of 046 Primer</span>
<span class="t" style="left:788.94px;top:618.20px;font-size:13px;line-height:18px;color:#ffffff;transform:scaleX(0.9587);">$74.95</span>
<span class="t" style="left:207.90px;top:652.30px;font-size:13px;line-height:18px;color:#ffffff;transform:scaleX(1.0269);">1/24/2026</span>
<span class="t" style="left:308.62px;top:652.30px;font-size:13px;line-height:18px;color:#ffffff;transform:scaleX(0.9864);">Paint Store</span>
<span class="t" style="left:433.62px;top:652.30px;font-size:13px;line-height:18px;color:#ffffff;">8 gallons of Regal Select Flat</span>
<span class="t" style="left:785.13px;top:652.30px;font-size:13px;line-height:18px;color:#ffffff;transform:scaleX(0.9666);">$588.00</span>
<span class="t" style="left:207.90px;top:686.10px;font-size:13px;line-height:18px;color:#ffffff;transform:scaleX(1.0269);">1/24/2026</span>
<span class="t" style="left:308.62px;top:686.10px;font-size:13px;line-height:18px;color:#ffffff;transform:scaleX(0.9864);">Paint Store</span>
<span class="t" style="left:433.62px;top:686.10px;font-size:13px;line-height:18px;color:#ffffff;transform:scaleX(0.9923);">3 Gallons of Regal Select Soft Gloss</span>
<span class="t" style="left:785.13px;top:686.10px;font-size:13px;line-height:18px;color:#ffffff;transform:scaleX(0.9666);">$210.00</span>
<span class="t" style="left:780.94px;top:899.30px;font-size:13px;line-height:18px;color:#ffffff;transform:scaleX(0.9623);">$872.95</span>
<span class="t" style="left:1071.12px;top:391.00px;font-size:15px;line-height:21px;color:#ffffff;">Job Breakdown</span>
<span class="t" style="left:950.49px;top:431.70px;font-size:11.5px;line-height:16px;color:#ffffff;transform:scaleX(0.9856);">Labor: $2,705.00</span>
<span class="t" style="left:1100.49px;top:431.70px;font-size:11.5px;line-height:16px;color:#ffffff;transform:scaleX(0.9798);">Materials: $872.95</span>
<span class="t" style="left:1223.00px;top:431.70px;font-size:11.5px;line-height:16px;color:#ffffff;transform:scaleX(0.9719);">Overhead: $489.42</span>
<span class="t" style="left:950.50px;top:449.80px;font-size:11.5px;line-height:16px;color:#ffffff;transform:scaleX(0.9700);">Workers Comp: $275.01</span>
<span class="t" style="left:1100.49px;top:449.80px;font-size:11.5px;line-height:16px;color:#ffffff;transform:scaleX(0.9895);">Profit: $1,730.65</span>
<svg class="a" style="left:0;top:0" width="1392" height="989" viewBox="0 0 1392 989">
<rect x="663" y="429" width="32" height="32" fill="#2e2e2e" opacity="0.6"/>
<path d="M663.7,429.9 L663.7,445.4 L667.6,441.8 L670.5,448 L672.5,447.1 L669.7,441.1 L674.4,440.8 Z" fill="#fff" stroke="#07070d" stroke-width="0.9" stroke-linejoin="round"/>
</svg>

</body></html>
